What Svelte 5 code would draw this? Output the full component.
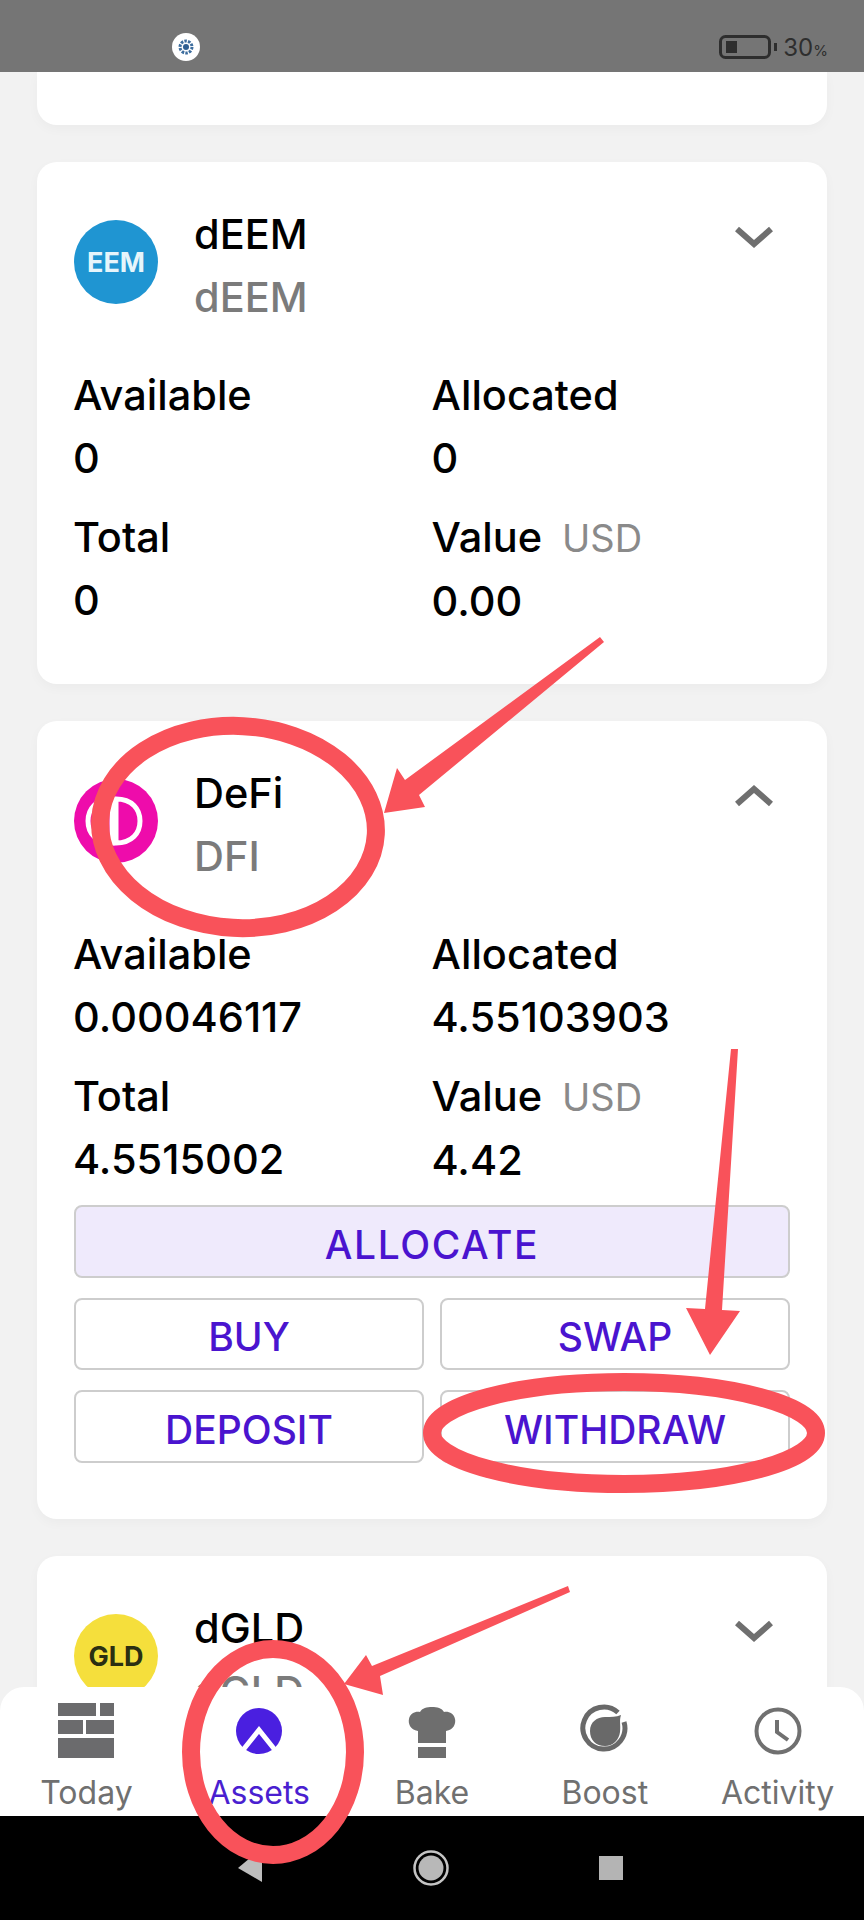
<script>
	const tabs = [
		{ label: 'Today', key: 'today' },
		{ label: 'Assets', key: 'assets', active: true },
		{ label: 'Bake', key: 'bake' },
		{ label: 'Boost', key: 'boost' },
		{ label: 'Activity', key: 'activity' }
	];

	const deem = [
		{ label: 'Available', value: '0' },
		{ label: 'Allocated', value: '0' },
		{ label: 'Total', value: '0' },
		{ label: 'Value', unit: 'USD', value: '0.00' }
	];

	const defi = [
		{ label: 'Available', value: '0.00046117' },
		{ label: 'Allocated', value: '4.55103903' },
		{ label: 'Total', value: '4.5515002' },
		{ label: 'Value', unit: 'USD', value: '4.42' }
	];

	const actions = ['BUY', 'SWAP', 'DEPOSIT', 'WITHDRAW'];
</script>

{#snippet chevron(up)}
	<svg class="chevron" viewBox="0 0 40 22" width="40" height="22">
		{#if up}
			<path d="M3 19 L20 4 L37 19" />
		{:else}
			<path d="M3 3 L20 18 L37 3" />
		{/if}
	</svg>
{/snippet}

{#snippet stats(rows)}
	<div class="stats">
		{#each rows as row}
			<div class="stat">
				<div>{row.label}{#if row.unit}<span class="unit">{row.unit}</span>{/if}</div>
				<div>{row.value}</div>
			</div>
		{/each}
	</div>
{/snippet}

<div class="screen">
	<header class="status">
		<svg viewBox="0 0 28 28" width="28" height="28">
			<circle cx="14" cy="14" r="14" fill="#fff" />
			<circle cx="14" cy="14" r="6" fill="none" stroke="#3d6d9e" stroke-width="3" stroke-dasharray="2.5 1.2" />
			<circle cx="14" cy="14" r="3" fill="#2f5f92" />
		</svg>
		<span class="battery">
			<svg viewBox="0 0 58 24" width="58" height="24">
				<rect x="1.5" y="1.5" width="49" height="21" rx="5" fill="none" stroke="#2e2e2e" stroke-width="3" />
				<rect x="7" y="6" width="11" height="12" fill="#2e2e2e" />
				<rect x="55" y="8" width="3" height="8" fill="#2e2e2e" />
			</svg>
			<span class="pct">30<small>%</small></span>
		</span>
	</header>

	<main class="list">
		<section class="card stub"></section>

		<section class="card">
			<div class="head">
				<div class="coin eem">EEM</div>
				<div class="names">
					<div>dEEM</div>
					<div class="sub">dEEM</div>
				</div>
				{@render chevron(false)}
			</div>
			{@render stats(deem)}
		</section>

		<section class="card open">
			<div class="head">
				<div class="coin defi">
					<svg viewBox="0 0 84 84" width="84" height="84">
						<path d="M42 20 C58 20 66 30 66 42 C66 54 58 64 42 64 Z" fill="none" stroke="#fff" stroke-width="5" />
						<path d="M38 20 C22 20 14 30 14 42 C14 54 22 64 38 64 Z" fill="none" stroke="#fff" stroke-width="5" />
					</svg>
				</div>
				<div class="names">
					<div>DeFi</div>
					<div class="sub">DFI</div>
				</div>
				{@render chevron(true)}
			</div>
			{@render stats(defi)}
			<div class="actions">
				<button class="btn primary">ALLOCATE</button>
				{#each actions as action}
					<button class="btn">{action}</button>
				{/each}
			</div>
		</section>

		<section class="card">
			<div class="head">
				<div class="coin gld">GLD</div>
				<div class="names">
					<div>dGLD</div>
					<div class="sub">dGLD</div>
				</div>
				{@render chevron(false)}
			</div>
		</section>
	</main>

	<div class="bottom">
		<nav class="tabs">
			{#each tabs as tab}
				<div class="tab" class:active={tab.active}>
					<svg class="tab-icon" viewBox="0 0 56 56" width="56" height="56">
						{#if tab.key === 'today'}
							<path d="M0 0H38V13H0Z M42 0H56V13H42Z M0 17H25V31H0Z M28 17H56V31H28Z M0 35H56V55H0Z" fill="#6b6b6d" />
						{:else if tab.key === 'assets'}
							<circle cx="28" cy="28" r="23" fill="#4a1fe0" />
							<path d="M12 47 L28 27 L44 47" fill="none" stroke="#fff" stroke-width="5" />
						{:else if tab.key === 'bake'}
							<path d="M14 40 V28 C6 27 4 20 5 16 C6 10 12 8 16 9 C18 5 23 4 28 4 C33 4 38 5 40 9 C44 8 50 10 51 16 C52 20 50 27 42 28 V40 Z" fill="#6e6e6e" />
							<rect x="14" y="44" width="28" height="11" fill="#6e6e6e" />
						{:else if tab.key === 'boost'}
							<path d="M41 9.5 A21 21 0 1 0 47 19" fill="none" stroke="#696969" stroke-width="5" />
							<path d="M44 12 C42 18 44 22 43 29 C42 37 36 43 28 43 C19 43 13 37 13 28 C13 19 20 14 28 14 C34 14 39 14 44 12 Z" fill="#696969" />
						{:else}
							<circle cx="28" cy="28" r="21.5" fill="none" stroke="#707070" stroke-width="4" />
							<path d="M27 17 V29 L38 37" fill="none" stroke="#707070" stroke-width="4" />
						{/if}
					</svg>
					<span>{tab.label}</span>
				</div>
			{/each}
		</nav>
		<div class="sysnav">
			<svg viewBox="0 0 864 104" width="864" height="104">
				<path d="M238 52 L262 32 V66 Z" fill="#bdbdbd" />
				<circle cx="431" cy="52" r="16.5" fill="none" stroke="#c4c4c4" stroke-width="2.5" />
				<circle cx="431" cy="52" r="12.5" fill="#b8b8b8" />
				<rect x="599" y="40" width="24" height="24" fill="#b4b4b4" />
			</svg>
		</div>
	</div>

	<!-- hand drawn annotations on top of the screenshot -->
	<svg class="marks" viewBox="0 0 864 1920" width="864" height="1920">
		<g fill="none" stroke="#f9525a" stroke-width="18">
			<ellipse cx="238" cy="827" rx="138" ry="101" transform="rotate(3 238 827)" />
			<ellipse cx="624" cy="1433" rx="192" ry="51" />
			<ellipse cx="273" cy="1752" rx="82" ry="103" />
		</g>
		<g fill="#f9525a">
			<path d="M600 637 L604 642 L419 795 L425 807 L384 813 L397 768 L405 780 Z" />
			<path d="M731 1049 L738 1049 L722 1310 L740 1311 L710 1355 L686 1308 L705 1309 Z" />
			<path d="M568 1586 L570 1592 L380 1676 L383 1695 L344 1684 L366 1655 L372 1666 Z" />
		</g>
	</svg>
</div>

<style>
	:global(body) {
		margin: 0;
		background: #f2f2f2;
	}

	.screen {
		position: relative;
		width: 864px;
		height: 1920px;
		overflow: hidden;
		display: flex;
		flex-direction: column;
		background: #f2f2f2;
		color: #000;
		font-family: 'Inter', 'Noto Sans', sans-serif;
		font-size: 41.5px;
		font-weight: 500;
	}

	.status {
		flex: none;
		height: 72px;
		background: #757575;
		display: flex;
		align-items: center;
		justify-content: space-between;
		padding: 22px 36px 0 172px;
		box-sizing: border-box;
	}
	.battery {
		display: flex;
		align-items: center;
		gap: 6px;
	}
	.pct {
		color: #2e2e2e;
		font-size: 24px;
		font-weight: 400;
	}
	.pct small {
		font-size: 15px;
	}

	.list {
		flex: 1;
		min-height: 0;
		overflow: hidden;
		padding: 0 37px;
		display: flex;
		flex-direction: column;
		gap: 37px;
	}

	.card {
		flex: none;
		background: #fff;
		border-radius: 20px;
		box-shadow: 0 4px 12px rgba(0, 0, 0, 0.03);
		padding: 41px 37px 0;
		height: 522px;
		box-sizing: border-box;
	}
	.card.stub {
		height: 53px;
		padding: 0;
		border-radius: 0 0 20px 20px;
	}
	.card.open {
		height: 798px;
	}

	.head {
		display: flex;
		align-items: flex-start;
		gap: 36px;
	}
	.coin {
		flex: none;
		width: 84px;
		height: 84px;
		margin-top: 17px;
		border-radius: 50%;
		display: flex;
		align-items: center;
		justify-content: center;
		overflow: hidden;
		font-size: 27px;
		font-weight: 700;
	}
	.eem {
		background: #1f95d2;
		color: #e6f5fb;
	}
	.defi {
		background: #ee0cab;
	}
	.gld {
		background: #f5df3c;
		color: #2b2f12;
	}
	.names {
		line-height: 63px;
		flex: 1;
	}
	.sub {
		color: #7b7b7b;
	}
	.chevron {
		flex: none;
		margin: 23px 16px 0 0;
	}
	.chevron path {
		fill: none;
		stroke: #6f6f6f;
		stroke-width: 6;
	}

	.stats {
		display: grid;
		grid-template-columns: 1fr 1fr;
		row-gap: 16px;
		margin-top: 35px;
		line-height: 63px;
		margin-left: -1px;
	}
	.unit {
		margin-left: 20px;
		color: #8a8a8a;
		font-size: 38px;
		font-weight: 400;
	}

	.actions {
		display: grid;
		grid-template-columns: 1fr 1fr;
		gap: 20px 16px;
		margin-top: 13px;
	}
	.btn {
		height: 72.5px;
		padding: 6px 0 0;
		background: #fff;
		border: 2px solid #cdcdcd;
		border-radius: 8px;
		color: #4a14cf;
		font: inherit;
		font-size: 39px;
	}
	.btn.primary {
		grid-column: 1 / -1;
		background: #efeafc;
		letter-spacing: 1.6px;
	}

	.bottom {
		position: absolute;
		left: 0;
		right: 0;
		bottom: 0;
	}
	.tabs {
		height: 129px;
		box-sizing: border-box;
		background: #fff;
		border-radius: 24px 24px 0 0;
		display: grid;
		grid-template-columns: repeat(5, 1fr);
		padding-top: 16px;
	}
	.tab {
		display: flex;
		flex-direction: column;
		align-items: center;
		color: #707070;
		font-size: 32px;
		font-weight: 400;
		line-height: 40px;
	}
	.tab.active {
		color: #4a1fd0;
	}
	.tab-icon {
		margin-bottom: 14px;
	}
	.sysnav {
		height: 104px;
		background: #000;
	}
	.sysnav svg,
	.marks {
		display: block;
	}
	.marks {
		position: absolute;
		top: 0;
		left: 0;
		pointer-events: none;
	}
</style>
